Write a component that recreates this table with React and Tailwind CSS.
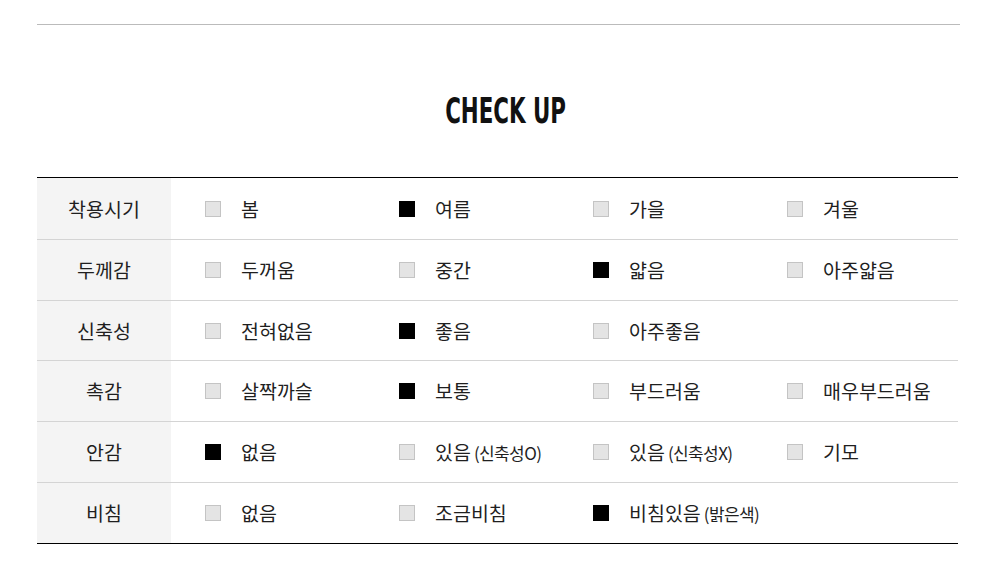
const ROWS = [
    { label: '착용시기', options: [['봄'], ['여름', null, true], ['가을'], ['겨울']] },
    { label: '두께감', options: [['두꺼움'], ['중간'], ['얇음', null, true], ['아주얇음']] },
    { label: '신축성', options: [['전혀없음'], ['좋음', null, true], ['아주좋음']] },
    { label: '촉감', options: [['살짝까슬'], ['보통', null, true], ['부드러움'], ['매우부드러움']] },
    { label: '안감', options: [['없음', null, true], ['있음', '(신축성O)'], ['있음', '(신축성X)'], ['기모']] },
    { label: '비침', options: [['없음'], ['조금비침'], ['비침있음', '(밝은색)', true]] },
];

function Option({ text, sub, checked }) {
    return (
        <div className="w-[194px] shrink-0 flex items-center">
            <span className={checked
                ? 'w-4 h-4 shrink-0 bg-black border border-black'
                : 'w-4 h-4 shrink-0 bg-[#e4e4e4] border border-[#c4c4c4]'} />
            <span className="ml-[20px] text-[19.5px] text-[#1f1f1f] leading-none whitespace-nowrap">
                {text}
                {sub && <span className="ml-[3px] text-[17px] tracking-[-0.6px]">{sub}</span>}
            </span>
        </div>
    );
}

export default function App() {
    return (
        <div className="w-[1000px] h-[566px] bg-white font-['Noto_Sans_CJK_KR',sans-serif] pt-6">
            <div className="ml-[37px] w-[923px] border-t border-[#bbb]" />

            <div className="h-[152px] flex items-center justify-center pt-[20px] pl-[12px]">
                <h1 className="font-['DejaVu_Sans_Condensed',sans-serif] font-bold text-[36px] text-[#111] scale-x-[0.66]">
                    CHECK UP
                </h1>
            </div>

            {/* Table */}
            <div className="ml-[37px] w-[921px] border-t border-b border-black">
                {ROWS.map((row, i) => (
                    <div key={row.label} className={`flex ${i === 2 ? 'h-[60px]' : 'h-[61px]'} ${i > 0 ? 'border-t border-[#d4d4d4]' : ''}`}>
                        <div className="w-[134px] shrink-0 bg-[#f4f4f4] flex items-center justify-center text-[19.5px] text-[#1f1f1f]">
                            {row.label}
                        </div>
                        <div className="flex items-center pl-[34px]">
                            {row.options.map(([text, sub, checked]) => (
                                <Option key={text + (sub || '')} text={text} sub={sub} checked={checked} />
                            ))}
                        </div>
                    </div>
                ))}
            </div>
        </div>
    );
}
